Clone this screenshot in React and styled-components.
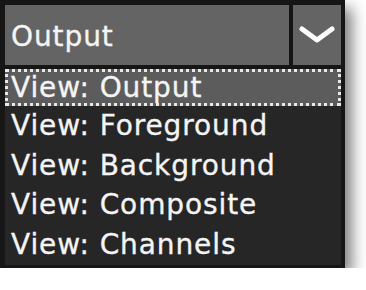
import React from 'react';
import styled, { createGlobalStyle } from 'styled-components';

const GlobalStyle = createGlobalStyle`
  html, body {
    margin: 0;
    padding: 0;
    background: #ffffff;
  }
  body {
    font-family: "DejaVu Sans", Verdana, sans-serif;
  }
`;

const Frame = styled.div`
  width: 345px;
  height: 268px;
  box-sizing: border-box;
  background: #161616;
  padding: 5px 4px 3px 5px;
  display: flex;
  flex-direction: column;
  gap: 4px;
  box-shadow: 7px 8px 14px rgba(0, 0, 0, 0.5);
`;

const Combo = styled.div`
  display: flex;
  height: 60px;
  gap: 4px;
`;

const Label = styled.div`
  font-size: 28px;
  letter-spacing: 0.9px;
  color: #f4f4f4;
  -webkit-text-stroke: 0.35px #f4f4f4;
  white-space: nowrap;
`;

const Field = styled(Label)`
  flex: 1;
  background: #646464;
  display: flex;
  align-items: center;
  padding-left: 6px;
  padding-top: 2px;
`;

const DropButton = styled.div`
  width: 48px;
  background: #646464;
  display: flex;
  align-items: center;
  justify-content: center;
`;

const List = styled.div`
  flex: 1;
  background: #262626;
  display: flex;
  flex-direction: column;
`;

const Item = styled(Label)`
  height: 39.5px;
  flex-shrink: 0;
  box-sizing: border-box;
  display: flex;
  align-items: center;
  padding-left: 3px;
  background: ${p => (p.$active ? '#5c5c5c' : 'transparent')};
  border: 3px dotted ${p => (p.$active ? '#e8e8e8' : 'transparent')};
  &:first-child {
    height: 37px;
  }
`;

const views = ['Output', 'Foreground', 'Background', 'Composite', 'Channels'];

export default function App() {
  return (
    <>
      <GlobalStyle />
      <Frame>
        <Combo>
          <Field>Output</Field>
          <DropButton>
            <svg width="38" height="22" viewBox="0 0 38 22">
              <path
                d="M4 5 L19 16 L34 5"
                fill="none"
                stroke="#ffffff"
                strokeWidth="5"
                strokeLinecap="round"
                strokeLinejoin="round"
              />
            </svg>
          </DropButton>
        </Combo>
        <List>
          {views.map((v, i) => (
            <Item key={v} $active={i === 0}>
              View: {v}
            </Item>
          ))}
        </List>
      </Frame>
    </>
  );
}
